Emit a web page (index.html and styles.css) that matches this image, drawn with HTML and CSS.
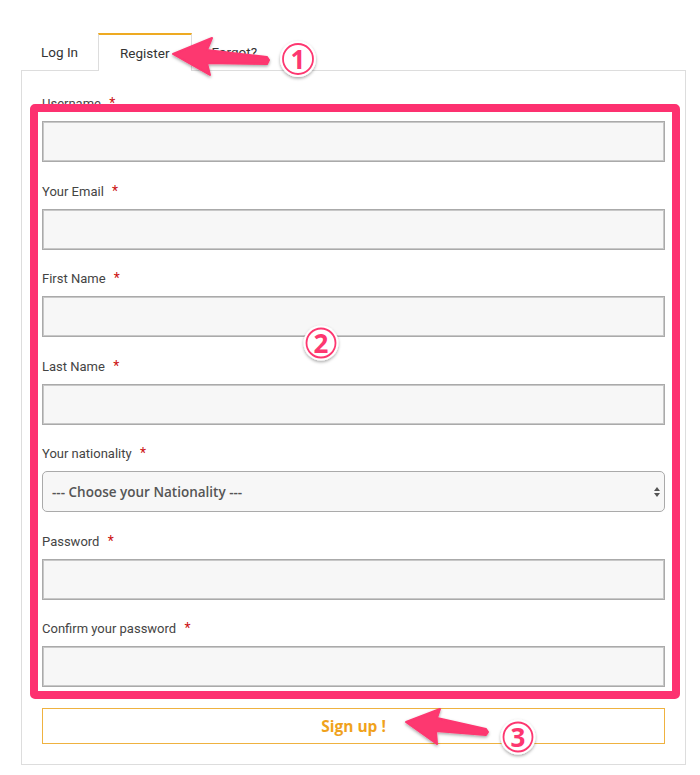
FILE: index.html
```html
<!DOCTYPE html>
<html lang="en">
<head>
<meta charset="utf-8">
<title>Register</title>
<link rel="stylesheet" href="styles.css">
</head>
<body>
<div class="page">
  <div class="tabs">
    <div class="tab">Log In</div>
    <div class="tab active">Register</div>
    <div class="tab">Forgot?</div>
  </div>
  <div class="panel">
    <div class="field">
      <label class="label">Username <span class="req">*</span></label>
      <input class="input" type="text">
    </div>
    <div class="field">
      <label class="label">Your Email <span class="req">*</span></label>
      <input class="input" type="text">
    </div>
    <div class="field">
      <label class="label">First Name <span class="req">*</span></label>
      <input class="input" type="text">
    </div>
    <div class="field">
      <label class="label">Last Name <span class="req">*</span></label>
      <input class="input" type="text">
    </div>
    <div class="field">
      <label class="label">Your nationality <span class="req">*</span></label>
      <div class="select-wrap">
        <div class="select">--- Choose your Nationality ---</div>
        <svg class="updown" width="8" height="12" viewBox="0 0 8 12"><path d="M4 1 L7 5 L1 5 Z M4 11 L7 7 L1 7 Z" fill="#555"/></svg>
      </div>
    </div>
    <div class="field">
      <label class="label">Password <span class="req">*</span></label>
      <input class="input" type="password">
    </div>
    <div class="field">
      <label class="label">Confirm your password <span class="req">*</span></label>
      <input class="input" type="password">
    </div>
    <button class="signup">Sign up !</button>
  </div>
</div>

<div class="highlight"></div>

<svg class="annot" width="700" height="775" viewBox="0 0 700 775">
  <defs>
    <filter id="sh" x="-50%" y="-50%" width="200%" height="200%">
      <feDropShadow dx="0" dy="1.5" stdDeviation="1.6" flood-color="#000" flood-opacity="0.35"/>
    </filter>
  </defs>
  <g fill="#fd3770" stroke="#fd3770" stroke-width="2" stroke-linejoin="round" filter="url(#sh)">
    <polygon points="173,54 212,38 207,50 267,57 269,60 267,64 207,63 210,75"/>
    <polygon points="406,722 440,709 437,718 486,729 488,732 486,735 436,731 437,744"/>
  </g>
  <g filter="url(#sh)">
    <circle cx="298" cy="59" r="18" fill="#fff"/>
    <circle cx="321" cy="343" r="17.5" fill="#fff"/>
    <circle cx="518" cy="737" r="17.5" fill="#fff"/>
  </g>
  <g fill="none" stroke="#fd3770" stroke-width="1.8">
    <circle cx="298" cy="59" r="15"/>
    <circle cx="321" cy="343" r="14.5"/>
    <circle cx="518" cy="737" r="14.5"/>
  </g>
  <g class="num" fill="#fd3770" text-anchor="middle">
    <text x="298" y="68.5">1</text>
    <text x="321" y="352.5">2</text>
    <text x="518" y="746.5">3</text>
  </g>
</svg>
</body>
</html>
```

FILE: styles.css
```css
html, body {
  margin: 0;
  padding: 0;
  background: #fff;
}
body {
  position: relative;
  width: 700px;
  height: 775px;
  overflow: hidden;
  font-family: Roboto, "Liberation Sans", sans-serif;
  color: #333;
}
.page {
  padding: 33px 0 0 21px;
  width: 665px;
}
.tabs {
  display: flex;
  height: 37px;
  position: relative;
  z-index: 1;
}
.tab {
  box-sizing: border-box;
  height: 38px;
  padding: 0 20px;
  display: flex;
  align-items: center;
  font-size: 13.5px;
  color: #333;
}
.tab.active {
  background: #fff;
  border: 1px solid #ddd;
  border-top: 2px solid #eeaa22;
  border-bottom: none;
  padding: 0 21px 0 21px;
}
.panel {
  border: 1px solid #ddd;
  padding: 22px 20px 20px;
}
.field {
  margin-bottom: 18.5px;
}
.field:last-of-type {
  margin-bottom: 0;
}
.label {
  display: block;
  height: 20px;
  line-height: 20px;
  margin-bottom: 8px;
  font-size: 13px;
  color: #444;
}
.req {
  color: #cc1111;
  margin-left: 5px;
  font-size: 14px;
}
.input {
  display: block;
  box-sizing: border-box;
  width: 100%;
  height: 41px;
  margin: 0;
  background: #f7f7f7;
  border: 1px solid #aaa;
  box-shadow: inset 0 0 0 1px #c8c8c8;
}
.select-wrap {
  position: relative;
}
.select {
  box-sizing: border-box;
  height: 41px;
  border: 1px solid #aaa;
  border-radius: 5px;
  background: #f7f7f7;
  padding-left: 9px;
  display: flex;
  align-items: center;
  font-family: "Open Sans", sans-serif;
  font-weight: 600;
  font-size: 13.5px;
  color: #555;
}
.updown {
  position: absolute;
  right: 4px;
  top: 15px;
}
.signup {
  display: block;
  box-sizing: border-box;
  width: 100%;
  height: 36px;
  margin-top: 21px;
  background: #fff;
  border: 1.5px solid #efb240;
  font-family: "Open Sans", sans-serif;
  font-weight: 700;
  font-size: 15.5px;
  color: #f0a21c;
  padding: 0;
}
.highlight {
  position: absolute;
  z-index: 2;
  left: 30px;
  top: 104px;
  width: 650px;
  height: 595px;
  box-sizing: border-box;
  border: 8.5px solid #fd3170;
  border-radius: 5px;
}
.annot {
  position: absolute;
  z-index: 3;
  left: 0;
  top: 0;
  pointer-events: none;
}
.num {
  font-family: "Open Sans", sans-serif;
  font-weight: 700;
  font-size: 26px;
}
```
